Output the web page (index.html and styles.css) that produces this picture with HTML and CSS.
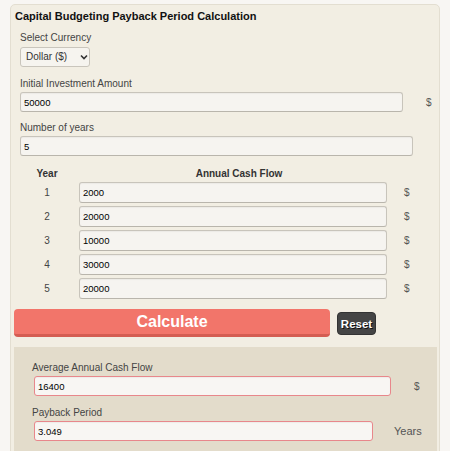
FILE: index.html
```html
<!DOCTYPE html>
<html lang="en">
<head>
  <meta charset="UTF-8" />
  <title>Capital Budgeting Payback Period Calculation</title>
  <link rel="stylesheet" href="styles.css">
</head>
<body>
  <div class="calc">
    <h1 class="calc-title">Capital Budgeting Payback Period Calculation</h1>
    <div class="form">
      <label class="lbl">Select Currency</label>
      <div class="select-wrap">
        <select class="currency">
          <option>Dollar ($)</option>
        </select>
        <svg class="chev" width="8" height="6" viewBox="0 0 8 6"><path d="M1 1.5 L4 4.5 L7 1.5" fill="none" stroke="#333" stroke-width="1.6"/></svg>
      </div>

      <label class="lbl">Initial Investment Amount</label>
      <div class="field-row">
        <input class="txt invest" type="text" value="50000">
        <span class="unit">$</span>
      </div>

      <label class="lbl">Number of years</label>
      <div class="field-row">
        <input class="txt years" type="text" value="5">
      </div>

      <div class="cf-table">
        <div class="cf-head">Year</div>
        <div class="cf-head cf-head-flow">Annual Cash Flow</div>
        <div></div>

        <div class="cf-year">1</div>
        <input class="txt cf-input" type="text" value="2000">
        <span class="unit">$</span>

        <div class="cf-year">2</div>
        <input class="txt cf-input" type="text" value="20000">
        <span class="unit">$</span>

        <div class="cf-year">3</div>
        <input class="txt cf-input" type="text" value="10000">
        <span class="unit">$</span>

        <div class="cf-year">4</div>
        <input class="txt cf-input" type="text" value="30000">
        <span class="unit">$</span>

        <div class="cf-year">5</div>
        <input class="txt cf-input" type="text" value="20000">
        <span class="unit">$</span>
      </div>
    </div>

    <div class="btn-row">
      <button class="btn-calc">Calculate</button>
      <button class="btn-reset">Reset</button>
    </div>

    <div class="result">
      <label class="lbl">Average Annual Cash Flow</label>
      <div class="field-row res-row">
        <input class="txt res avg" type="text" value="16400">
        <span class="unit">$</span>
      </div>

      <label class="lbl">Payback Period</label>
      <div class="field-row res-row">
        <input class="txt res payback" type="text" value="3.049">
        <span class="unit unit-years">Years</span>
      </div>
    </div>
  </div>
</body>
</html>
```

FILE: styles.css
```css
* {
  box-sizing: border-box;
}
body {
  margin: 0;
  background-color: #f8f6f3;
  font-family: "Liberation Sans", Arial, sans-serif;
  color: #444;
}
.calc {
  margin: 4px 0 0 10px;
  width: 430px;
  padding-top: 4px;
  background-color: #f2eee3;
  border: 1px solid #e3ded1;
  border-radius: 5px;
}
.calc-title {
  margin: 0 0 0 4px;
  font-size: 11px;
  line-height: 14px;
  font-weight: bold;
  color: #111;
}
.form {
  padding: 9px 0 0 9px;
}
.lbl {
  display: block;
  font-size: 10px;
  line-height: 12px;
  color: #444;
  margin-bottom: 2px;
}
.select-wrap {
  position: relative;
  width: 70px;
  height: 20px;
  margin-bottom: 12px;
}
.currency {
  -webkit-appearance: none;
  appearance: none;
  width: 70px;
  height: 20px;
  padding: 0 0 0 5px;
  border: 1px solid #c9c5bc;
  border-radius: 3px;
  background-color: #f6f4ef;
  font-family: "Liberation Sans", Arial, sans-serif;
  font-size: 10px;
  color: #333;
}
.chev {
  position: absolute;
  left: 60px;
  top: 8px;
}
.field-row {
  display: flex;
  align-items: center;
  gap: 23px;
  margin-bottom: 10px;
}
.txt {
  height: 20px;
  padding: 0 3px;
  border: 1px solid #c8c4bb;
  border-bottom-color: #b9b5ac;
  border-radius: 3px;
  background-color: #f6f4f0;
  font-family: "Liberation Sans", Arial, sans-serif;
  font-size: 9.5px;
  color: #000;
  box-shadow: inset 0 1px 1px rgba(0, 0, 0, 0.04);
}
.invest {
  width: 383px;
}
.years {
  width: 393px;
}
.unit {
  font-size: 10px;
  color: #555;
}
.cf-table {
  display: grid;
  grid-template-columns: 54px 308px 1fr;
  column-gap: 5px;
  row-gap: 3px;
  align-items: center;
  margin-top: 12px;
}
.cf-table .unit {
  padding-left: 12px;
}
.cf-head {
  font-size: 10px;
  line-height: 12px;
  font-weight: bold;
  color: #333;
  text-align: center;
  margin-bottom: -1px;
}
.cf-head-flow {
  padding-left: 12px;
}
.cf-year {
  font-size: 10px;
  text-align: center;
  color: #444;
}
.cf-input {
  width: 308px;
  height: 21px;
}
.btn-row {
  display: flex;
  align-items: center;
  gap: 7px;
  margin: 10px 0 0 3px;
}
.btn-calc {
  width: 316px;
  height: 28px;
  padding: 0;
  border: none;
  border-bottom: 3px solid #d45d52;
  border-radius: 4px;
  background-color: #f2756a;
  color: #fff;
  font-family: "Liberation Sans", Arial, sans-serif;
  font-size: 16px;
  font-weight: bold;
}
.btn-reset {
  width: 39px;
  height: 23px;
  padding: 0;
  margin-top: 1px;
  border: 1px solid #333;
  border-radius: 4px;
  background-color: #454545;
  color: #fff;
  font-family: "Liberation Sans", Arial, sans-serif;
  font-size: 11.5px;
  font-weight: bold;
  text-shadow: 1px 1px 0 #111;
}
.result {
  margin: 10px 0 0 3px;
  width: 423px;
  padding: 15px 0 20px 18px;
  background-color: #e3dccb;
}
.res-row {
  margin-bottom: 11px;
}
.res {
  margin-left: 2px;
  border: 1px solid #e8878b;
  background-color: #f8f6f3;
}
.avg {
  width: 357px;
}
.payback {
  width: 339px;
}
.unit-years {
  margin-left: -2px;
  font-size: 11px;
}
```
